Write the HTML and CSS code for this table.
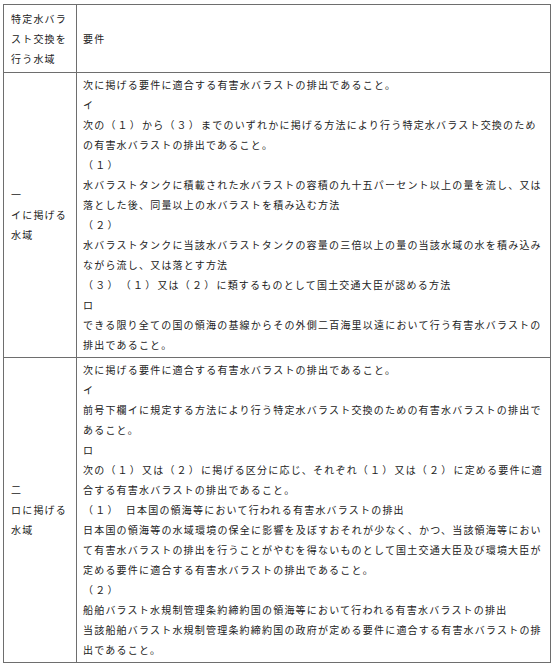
FILE: index.html
```html
<!DOCTYPE html>
<html lang="ja">
<head>
<meta charset="utf-8">
<title>特定水バラスト交換</title>
<link rel="stylesheet" href="styles.css">
</head>
<body>
<table class="law">
  <colgroup><col class="c-area"><col class="c-req"></colgroup>
  <thead>
    <tr>
      <th class="area">特定水バラスト交換を行う水域</th>
      <th class="req">要件</th>
    </tr>
  </thead>
  <tbody>
    <tr>
      <td class="area"><div>一</div><div>イに掲げる水域</div></td>
      <td class="req">
        <div>次に掲げる要件に適合する有害水バラストの排出であること。</div>
        <div>イ</div>
        <div>次の<span class="p">（１）</span>から<span class="p">（３）</span>までのいずれかに掲げる方法により行う特定水バラスト交換のための有害水バラストの排出であること。</div>
        <div><span class="p">（１）</span></div>
        <div>水バラストタンクに積載された水バラストの容積の九十五パーセント以上の量を流し、又は落とした後、同量以上の水バラストを積み込む方法</div>
        <div><span class="p">（２）</span></div>
        <div>水バラストタンクに当該水バラストタンクの容量の三倍以上の量の当該水域の水を積み込みながら流し、又は落とす方法</div>
        <div><span class="p">（３）</span>　<span class="p">（１）</span>又は<span class="p">（２）</span>に類するものとして国土交通大臣が認める方法</div>
        <div>ロ</div>
        <div>できる限り全ての国の領海の基線からその外側二百海里以遠において行う有害水バラストの排出であること。</div>
      </td>
    </tr>
    <tr>
      <td class="area"><div>二</div><div>ロに掲げる水域</div></td>
      <td class="req">
        <div>次に掲げる要件に適合する有害水バラストの排出であること。</div>
        <div>イ</div>
        <div>前号下欄イに規定する方法により行う特定水バラスト交換のための有害水バラストの排出であること。</div>
        <div>ロ</div>
        <div>次の<span class="p">（１）</span>又は<span class="p">（２）</span>に掲げる区分に応じ、それぞれ<span class="p">（１）</span>又は<span class="p">（２）</span>に定める要件に適合する有害水バラストの排出であること。</div>
        <div><span class="p">（１）</span>　日本国の領海等において行われる有害水バラストの排出</div>
        <div>日本国の領海等の水域環境の保全に影響を及ぼすおそれが少なく、かつ、当該領海等において有害水バラストの排出を行うことがやむを得ないものとして国土交通大臣及び環境大臣が定める要件に適合する有害水バラストの排出であること。</div>
        <div><span class="p">（２）</span></div>
        <div>船舶バラスト水規制管理条約締約国の領海等において行われる有害水バラストの排出</div>
        <div>当該船舶バラスト水規制管理条約締約国の政府が定める要件に適合する有害水バラストの排出であること。</div>
      </td>
    </tr>
  </tbody>
</table>
</body>
</html>
```
FILE: styles.css
```css
html, body {
  margin: 0;
  padding: 0;
  background: #ffffff;
}

body {
  font-family: "Noto Sans CJK JP", "Noto Sans", sans-serif;
  font-size: 10px;
  line-height: 20px;
  letter-spacing: 1.2px;
  color: #222222;
}

.law {
  border-collapse: collapse;
  table-layout: fixed;
  width: 547px;
  margin: 4px 0 0 3px;
}

.c-area { width: 73px; }
.c-req { width: 474px; }

.law th,
.law td {
  border: 1px solid #6e6e6e;
  font-weight: normal;
  text-align: left;
  vertical-align: middle;
  word-break: break-all;
}

.law th {
  padding: 4px 5px 3px 6px;
}

.law td {
  padding: 2px 5px 2px 6px;
}

.law td.area {
  padding-left: 7px;
}

.law th.area {
  padding-left: 7px;
}

.p {
  letter-spacing: 2.2px;
}
```
